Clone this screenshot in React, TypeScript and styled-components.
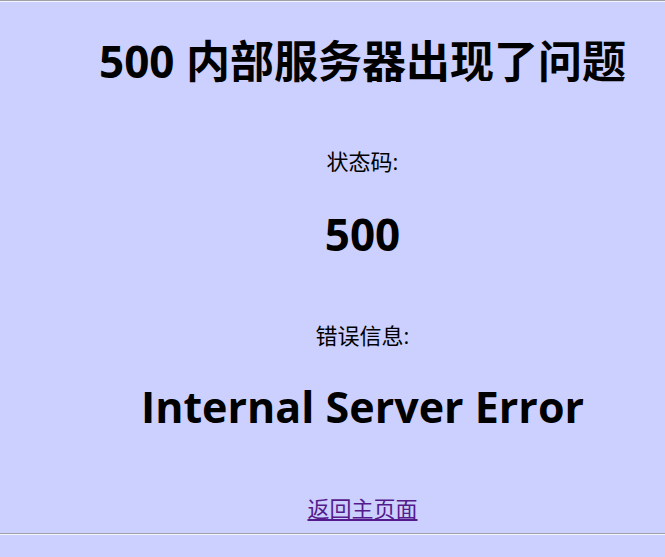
import React from "react";
import styled, { createGlobalStyle } from "styled-components";

const GlobalStyle = createGlobalStyle`
  html, body {
    margin: 0;
    padding: 0;
    background: #ccd0ff;
  }
  body {
    font-family: "Open Sans", "Noto Sans CJK SC", sans-serif;
    color: #000;
  }
`;

const Page = styled.div`
  width: 665px;
  height: 557px;
  background: #ccd0ff;
  display: flex;
  flex-direction: column;
  overflow: hidden;
`;

const Rule = styled.hr`
  margin: 0;
  height: 0;
  border: 0;
  border-top: 1px solid #a0a0a8;
  border-bottom: 1px solid #f4f4ff;
  width: 100%;
  flex: none;
`;

const Content = styled.main`
  display: flex;
  flex-direction: column;
  align-items: center;
  padding-left: 60px;
`;

const Line = styled.div<{ $size: number; $lh: number; $top: number; $bold?: boolean }>`
  font-size: ${(p) => p.$size}px;
  line-height: ${(p) => p.$lh}px;
  margin-top: ${(p) => p.$top}px;
  font-weight: ${(p) => (p.$bold ? 700 : 400)};
  white-space: nowrap;
`;

const Title = styled.h1`
  margin: 29px 0 0;
  font-size: 44px;
  line-height: 60px;
  font-weight: 700;
  white-space: nowrap;
`;

const HomeLink = styled.a`
  margin-top: 56px;
  font-size: 22px;
  line-height: 30px;
  color: #551a8b;
  text-decoration: underline;
`;

const Bottom = styled.div`
  margin-top: 10px;
`;

export default function App() {
  return (
    <Page>
      <GlobalStyle />
      <Rule />
      <Content>
        <Title>500 内部服务器出现了问题</Title>
        <Line $size={22} $lh={30} $top={55}>状态码:</Line>
        <Line $size={44} $lh={60} $top={28} $bold>500</Line>
        <Line $size={22} $lh={30} $top={56}>错误信息:</Line>
        <Line $size={43} $lh={60} $top={27} $bold>Internal Server Error</Line>
        <HomeLink href="#">返回主页面</HomeLink>
      </Content>
      <Bottom>
        <Rule />
      </Bottom>
    </Page>
  );
}
